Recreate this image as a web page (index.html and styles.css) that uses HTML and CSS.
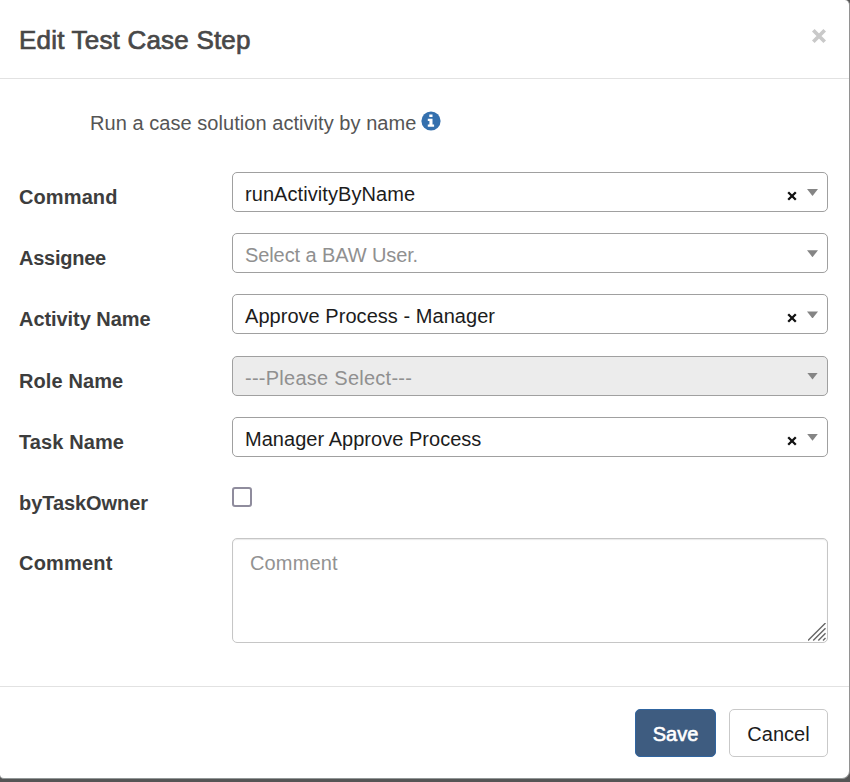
FILE: index.html
```html
<!DOCTYPE html>
<html lang="en">
<head>
<meta charset="utf-8">
<title>Edit Test Case Step</title>
<link rel="stylesheet" href="styles.css">
</head>
<body>
<div class="modal">
  <header class="modal-header">
    <h1><span class="t-title">Edit Test Case Step</span></h1>
    <button class="close" type="button" aria-label="Close"><svg width="16" height="16" viewBox="0 0 16 16"><path d="M2.3 2.3 13.7 13.7M13.7 2.3 2.3 13.7" stroke="#c9c9c9" stroke-width="3.7"/></svg></button>
  </header>
  <main class="modal-body">
    <p class="description"><span class="t-desc">Run a case solution activity by name</span><svg class="info" width="20" height="20" viewBox="0 0 20 20"><circle cx="10" cy="10" r="9.6" fill="#3470ae"/><path d="M8.3 3.4h3.2v2.7H8.3zM6.8 7.8h4.7v5.7h1.6v2.2H6.8v-2.2h1.6v-3.5H6.8z" fill="#fff"/></svg></p>
    <div class="row">
      <label><span class="l-command">Command</span></label>
      <div class="select"><span class="value v-run">runActivityByName</span><svg class="clear" width="10" height="10" viewBox="0 0 10 10"><path d="M1.2 1.2 8.8 8.8M8.8 1.2 1.2 8.8" stroke="#111" stroke-width="2.3"/></svg><i class="arrow"></i></div>
    </div>
    <div class="row">
      <label><span class="l-assignee">Assignee</span></label>
      <div class="select"><span class="value placeholder v-user">Select a BAW User.</span><i class="arrow"></i></div>
    </div>
    <div class="row">
      <label><span class="l-activity">Activity Name</span></label>
      <div class="select"><span class="value v-approve">Approve Process - Manager</span><svg class="clear" width="10" height="10" viewBox="0 0 10 10"><path d="M1.2 1.2 8.8 8.8M8.8 1.2 1.2 8.8" stroke="#111" stroke-width="2.3"/></svg><i class="arrow"></i></div>
    </div>
    <div class="row">
      <label><span class="l-role">Role Name</span></label>
      <div class="select disabled"><span class="value placeholder v-please">---Please Select---</span><i class="arrow"></i></div>
    </div>
    <div class="row">
      <label><span class="l-task">Task Name</span></label>
      <div class="select"><span class="value v-manager">Manager Approve Process</span><svg class="clear" width="10" height="10" viewBox="0 0 10 10"><path d="M1.2 1.2 8.8 8.8M8.8 1.2 1.2 8.8" stroke="#111" stroke-width="2.3"/></svg><i class="arrow"></i></div>
    </div>
    <div class="row row-check">
      <label><span class="l-owner">byTaskOwner</span></label>
      <span class="checkbox" role="checkbox" aria-checked="false"></span>
    </div>
    <div class="row row-comment">
      <label><span class="l-comment">Comment</span></label>
      <div class="textarea"><span class="v-comment">Comment</span><svg class="grip" width="18" height="18" viewBox="0 0 18 18"><path d="M0 17.5 17.5 0M5.2 17.5 17.5 5.2M10.3 17.5 17.5 10.3M15 17.5 17.5 15" stroke="#666" stroke-width="1.4"/></svg></div>
    </div>
  </main>
  <footer class="modal-footer">
    <button class="btn save" type="button"><span>Save</span></button>
    <button class="btn cancel" type="button"><span>Cancel</span></button>
  </footer>
</div>
</body>
</html>
```
FILE: styles.css
```css
* { box-sizing: border-box; }
body {
  margin: 0;
  height: 782px;
  overflow: hidden;
  background: #555;
  font-family: "Liberation Sans", Arial, sans-serif;
  font-size: 20px;
  line-height: 24px;
  color: #444;
}
.modal {
  display: flex;
  flex-direction: column;
  width: 850px;
  height: 779px;
  background: #fff;
  border-right: 1px solid #929292;
  border-bottom: 1px solid #929797;
  border-radius: 0 5px 8px 4px;
}
.modal-header {
  display: flex;
  justify-content: space-between;
  height: 79px;
  padding: 24px 22px 0 19px;
  border-bottom: 1px solid #e2e2e2;
}
h1 {
  margin: 0;
  font-size: 26px;
  line-height: 32px;
  font-weight: 400;
  color: #484848;
  -webkit-text-stroke: 0.7px #484848;
}
.t-title { letter-spacing: 0.2px; }
.t-desc { letter-spacing: 0.05px; }
.l-command, .l-role, .l-task { letter-spacing: 0.1px; }
.l-assignee { letter-spacing: -0.25px; }
.l-activity, .l-owner { letter-spacing: -0.06px; }
.l-comment { letter-spacing: 0.2px; }
.v-run { letter-spacing: 0.07px; }
.v-user { letter-spacing: -0.1px; }
.v-approve { letter-spacing: 0.04px; }
.v-please { letter-spacing: 0.26px; }
.v-manager { letter-spacing: 0.03px; }
.v-comment { letter-spacing: 0.15px; }
button { font: inherit; }
.close {
  display: block;
  width: 16px;
  height: 16px;
  margin-top: 4px;
  padding: 0;
  border: 0;
  background: none;
}
.close svg { display: block; }
.modal-body {
  height: 607px;
  padding: 32px 21px 0 19px;
}
.description {
  display: flex;
  height: 61px;
  margin: 0;
  padding-left: 71px;
  color: #555;
}
.info { margin-left: 5px; }
.row {
  display: grid;
  grid-template-columns: 213px 596px;
  height: 61.2px;
}
label { padding-top: 13px; font-weight: 700; color: #3d3d3d; }
.select {
  display: flex;
  height: 40px;
  padding: 9px 9px 0 12px;
  border: 1px solid #a0a0a0;
  border-radius: 5px;
  color: #1c1c1c;
}
.value { flex: 1; white-space: nowrap; }
.placeholder { color: #909090; }
.disabled { background: #ececec; }
.clear { margin: 9px 10px 0 0; }
.arrow {
  width: 11px;
  height: 7px;
  margin-top: 7px;
  background: #858585;
  clip-path: polygon(0 0, 100% 0, 50% 100%);
}
.checkbox {
  width: 20px;
  height: 20px;
  margin-top: 9px;
  border: 2px solid #8f8c9d;
  border-radius: 3px;
}
.row-check { height: 60px; }
.textarea {
  position: relative;
  height: 105px;
  padding: 12px 17px;
  border: 1px solid #c6c6c6;
  border-radius: 5px;
  box-shadow: inset 0 1px 1px #e9e9e9;
  color: #929292;
}
.grip { position: absolute; right: 1px; bottom: 1px; }
.modal-footer {
  display: flex;
  justify-content: flex-end;
  gap: 13px;
  padding: 22px 21px 0;
  height: 92px;
  border-top: 1px solid #e2e2e2;
}
.btn {
  height: 48px;
  padding: 2px 0 0;
  border-radius: 5px;
  line-height: 24px;
}
.save {
  width: 81px;
  border: 1px solid #3065a0;
  background: #3e5c80;
  color: #fff;
  -webkit-text-stroke: 0.6px #fff;
}
.cancel {
  width: 99px;
  border: 1px solid #c9c9c9;
  background: #fff;
  color: #1c1c1c;
}
```
